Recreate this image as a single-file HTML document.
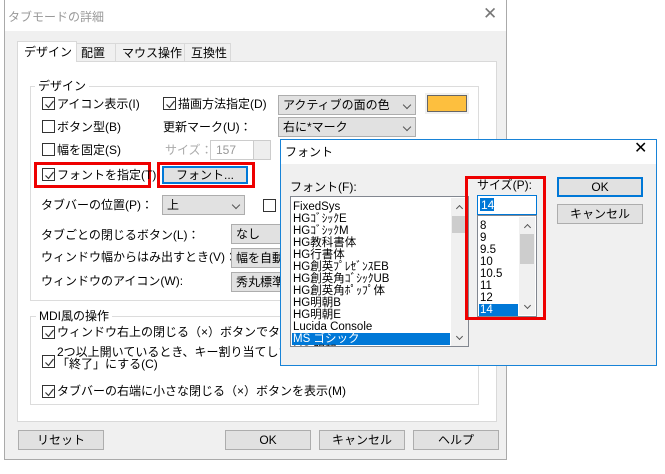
<!DOCTYPE html>
<html><head><meta charset="utf-8"><style>
*{margin:0;padding:0;box-sizing:border-box}
body{width:665px;height:474px;background:#fff;position:relative;overflow:hidden;font-family:"Liberation Sans","Noto Sans CJK JP",sans-serif;font-size:12px;color:#000}
.a{position:absolute;white-space:nowrap;line-height:14px}
.cb{position:absolute;width:13px;height:13px;border:1px solid #333;background:#fff}
.cb svg{position:absolute;left:1px;top:1px}
.cmb{position:absolute;background:#e1e1e1;border:1px solid #adadad;height:20px;line-height:18px;padding-left:4px;overflow:hidden}
.cmb i{position:absolute;right:5px;top:6px;width:6px;height:6px;border-right:1px solid #555;border-bottom:1px solid #555;transform:rotate(45deg)}
.btn{position:absolute;background:#e1e1e1;border:1px solid #adadad;text-align:center;line-height:18px;height:20px}
.red{position:absolute;border:3px solid #e00}
.grp{position:absolute;border:1px solid #dcdcdc}
.lg{position:absolute;background:#fff;padding:0 3px;line-height:14px}
.li{position:absolute;left:2px;line-height:12px;height:12px;font-size:11.5px;white-space:nowrap}
.up,.dn{position:absolute;width:5px;height:5px;border-left:1px solid #555;border-top:1px solid #555}
.up{transform:rotate(45deg)}.dn{transform:rotate(225deg)}
</style></head><body>
<div style="position:absolute;left:4px;top:0;width:503px;height:460px;border:1px solid #aaa;border-top:none;background:#f0f0f0"></div>
<div style="position:absolute;left:5px;top:0;width:501px;height:31px;background:#fff"></div>
<div class="a" style="left:8px;top:10px;color:#999">タブモードの詳細</div>
<div class="a" style="left:483px;top:7px;font-size:17px;color:#777">✕</div>
<div style="position:absolute;left:17px;top:61px;width:480px;height:361px;background:#fff;border:1px solid #d9d9d9"></div>
<div style="position:absolute;left:76px;top:43px;width:40px;height:19px;border:1px solid #d9d9d9;background:#f0f0f0"></div>
<div style="position:absolute;left:115px;top:43px;width:70px;height:19px;border:1px solid #d9d9d9;background:#f0f0f0"></div>
<div style="position:absolute;left:184px;top:43px;width:47px;height:19px;border:1px solid #d9d9d9;background:#f0f0f0"></div>
<div style="position:absolute;left:17px;top:41px;width:60px;height:21px;border:1px solid #d9d9d9;border-bottom:none;background:#fff"></div>
<div class="a" style="left:24px;top:45px">デザイン</div>
<div class="a" style="left:81px;top:46px">配置</div>
<div class="a" style="left:122px;top:46px">マウス操作</div>
<div class="a" style="left:191px;top:46px">互換性</div>
<div class="grp" style="left:30px;top:86px;width:449px;height:215px"></div>
<div class="lg" style="left:35px;top:79px">デザイン</div>
<div class="cb" style="left:42px;top:97px"><svg width="11" height="11"><path d="M1.5 5.5l3 3 5-6.5" fill="none" stroke="#333" stroke-width="1.2"/></svg></div>
<div class="a" style="left:57px;top:97px">アイコン表示(I)</div>
<div class="cb" style="left:163px;top:97px"><svg width="11" height="11"><path d="M1.5 5.5l3 3 5-6.5" fill="none" stroke="#333" stroke-width="1.2"/></svg></div>
<div class="a" style="left:178px;top:97px">描画方法指定(D)</div>
<div class="cmb" style="left:278px;top:95px;width:138px">アクティブの面の色<i></i></div>
<div style="position:absolute;left:425px;top:93px;width:44px;height:21px;background:#f0f0f0"></div>
<div style="position:absolute;left:427px;top:95px;width:40px;height:17px;background:#fdbf3e;border:1px solid #666"></div>
<div class="cb" style="left:42px;top:120px"></div>
<div class="a" style="left:57px;top:120px">ボタン型(B)</div>
<div class="a" style="left:163px;top:120px">更新マーク(U)：</div>
<div class="cmb" style="left:278px;top:117px;width:138px">右に*マーク<i></i></div>
<div class="cb" style="left:42px;top:143px"></div>
<div class="a" style="left:57px;top:143px">幅を固定(S)</div>
<div class="a" style="left:165px;top:143px;color:#aaa">サイズ：</div>
<div style="position:absolute;left:210px;top:140px;width:61px;height:20px;border:1px solid #ccc;background:#fff"></div>
<div class="a" style="left:216px;top:143px;color:#999">157</div>
<div style="position:absolute;left:253px;top:141px;width:17px;height:18px;background:#eee;border-left:1px solid #ccc"></div>
<div class="red" style="left:34px;top:162px;width:117px;height:26px"></div>
<div class="cb" style="left:42px;top:168px"><svg width="11" height="11"><path d="M1.5 5.5l3 3 5-6.5" fill="none" stroke="#333" stroke-width="1.2"/></svg></div>
<div class="a" style="left:57px;top:168px">フォントを指定(T)</div>
<div class="red" style="left:157px;top:162px;width:98px;height:26px"></div>
<div class="btn" style="left:162px;top:166px;width:86px;height:18px;border:2px solid #0078d7;line-height:14px">フォント...</div>
<div class="a" style="left:41px;top:198px">タブバーの位置(P)：</div>
<div class="cmb" style="left:162px;top:195px;width:83px">上<i></i></div>
<div class="cb" style="left:263px;top:199px"></div>
<div class="a" style="left:41px;top:228px">タブごとの閉じるボタン(L)：</div>
<div class="cmb" style="left:231px;top:224px;width:60px">なし</div>
<div class="a" style="left:41px;top:250px">ウィンドウ幅からはみ出すとき(V)：</div>
<div class="cmb" style="left:231px;top:248px;width:60px">幅を自動</div>
<div class="a" style="left:41px;top:274px">ウィンドウのアイコン(W):</div>
<div class="cmb" style="left:231px;top:272px;width:60px">秀丸標準</div>
<div class="grp" style="left:30px;top:316px;width:449px;height:89px"></div>
<div class="lg" style="left:36px;top:309px">MDI風の操作</div>
<div class="cb" style="left:42px;top:326px"><svg width="11" height="11"><path d="M1.5 5.5l3 3 5-6.5" fill="none" stroke="#333" stroke-width="1.2"/></svg></div>
<div class="a" style="left:57px;top:325px">ウィンドウ右上の閉じる（×）ボタンでタブを全て閉じる</div>
<div class="cb" style="left:42px;top:355px"><svg width="11" height="11"><path d="M1.5 5.5l3 3 5-6.5" fill="none" stroke="#333" stroke-width="1.2"/></svg></div>
<div class="a" style="left:57px;top:346px;line-height:12px">2つ以上開いているとき、キー割り当てした「ファイル</div>
<div class="a" style="left:57px;top:358px;line-height:12px">「終了」にする(C)</div>
<div class="cb" style="left:42px;top:385px"><svg width="11" height="11"><path d="M1.5 5.5l3 3 5-6.5" fill="none" stroke="#333" stroke-width="1.2"/></svg></div>
<div class="a" style="left:57px;top:384px">タブバーの右端に小さな閉じる（×）ボタンを表示(M)</div>
<div class="btn" style="left:18px;top:430px;width:86px">リセット</div>
<div class="btn" style="left:225px;top:430px;width:86px">OK</div>
<div class="btn" style="left:319px;top:430px;width:86px">キャンセル</div>
<div class="btn" style="left:413px;top:430px;width:86px">ヘルプ</div>

<div style="position:absolute;left:280px;top:139px;width:377px;height:227px;border:1px solid #1883d7;background:#f0f0f0"></div>
<div style="position:absolute;left:281px;top:140px;width:375px;height:24px;background:#fff"></div>
<div class="a" style="left:285px;top:145px">フォント</div>
<div class="a" style="left:634px;top:142px;font-size:16px">✕</div>
<div class="a" style="left:290px;top:180px">フォント(F):</div>
<div style="position:absolute;left:290px;top:196px;width:179px;height:151px;border:1px solid #828790;background:#fff;overflow:hidden">
<div class="li" style="top:4px">FixedSys</div>
<div class="li" style="top:16px">HGｺﾞｼｯｸE</div>
<div class="li" style="top:28px">HGｺﾞｼｯｸM</div>
<div class="li" style="top:40px">HG教科書体</div>
<div class="li" style="top:52px">HG行書体</div>
<div class="li" style="top:64px">HG創英ﾌﾟﾚｾﾞﾝｽEB</div>
<div class="li" style="top:76px">HG創英角ｺﾞｼｯｸUB</div>
<div class="li" style="top:88px">HG創英角ﾎﾟｯﾌﾟ体</div>
<div class="li" style="top:100px">HG明朝B</div>
<div class="li" style="top:112px">HG明朝E</div>
<div class="li" style="top:124px">Lucida Console</div>
<div style="position:absolute;left:1px;top:136px;width:158px;height:12px;background:#0078d7"></div>
<div class="li" style="top:136px;color:#fff">MS ゴシック</div>
<div class="li" style="top:148px">MS 明朝</div>
<div style="position:absolute;left:160px;top:1px;width:17px;height:148px;background:#f0f0f0"></div>
<div style="position:absolute;left:161px;top:19px;width:14px;height:17px;background:#cdcdcd"></div>
<div class="up" style="left:166px;top:9px"></div>
<div class="dn" style="left:166px;top:137px"></div>
</div>
<div class="red" style="left:465px;top:176px;width:81px;height:144px"></div>
<div class="a" style="left:477px;top:178px">サイズ(P):</div>
<div style="position:absolute;left:477px;top:195px;width:60px;height:20px;border:1px solid #0078d7;background:#fff"></div>
<div style="position:absolute;left:480px;top:198px;width:14px;height:13px;background:#0078d7"></div>
<div class="a" style="left:481px;top:198px;color:#fff">14</div>
<div style="position:absolute;left:477px;top:215px;width:60px;height:102px;border:1px solid #828790;background:#fff;overflow:hidden">
<div class="li" style="top:4px">8</div>
<div class="li" style="top:16px">9</div>
<div class="li" style="top:28px">9.5</div>
<div class="li" style="top:40px">10</div>
<div class="li" style="top:52px">10.5</div>
<div class="li" style="top:64px">11</div>
<div class="li" style="top:76px">12</div>
<div style="position:absolute;left:1px;top:88px;width:39px;height:12px;background:#0078d7"></div>
<div class="li" style="top:88px;color:#fff">14</div>
<div class="li" style="top:100px">16</div>
<div style="position:absolute;left:41px;top:1px;width:16px;height:98px;background:#f0f0f0"></div>
<div style="position:absolute;left:42px;top:18px;width:14px;height:30px;background:#cdcdcd"></div>
<div class="up" style="left:47px;top:9px"></div>
<div class="dn" style="left:47px;top:87px"></div>
</div>
<div class="btn" style="left:557px;top:177px;width:86px;border:2px solid #0078d7;line-height:16px">OK</div>
<div class="btn" style="left:557px;top:204px;width:86px">キャンセル</div>
</body></html>
